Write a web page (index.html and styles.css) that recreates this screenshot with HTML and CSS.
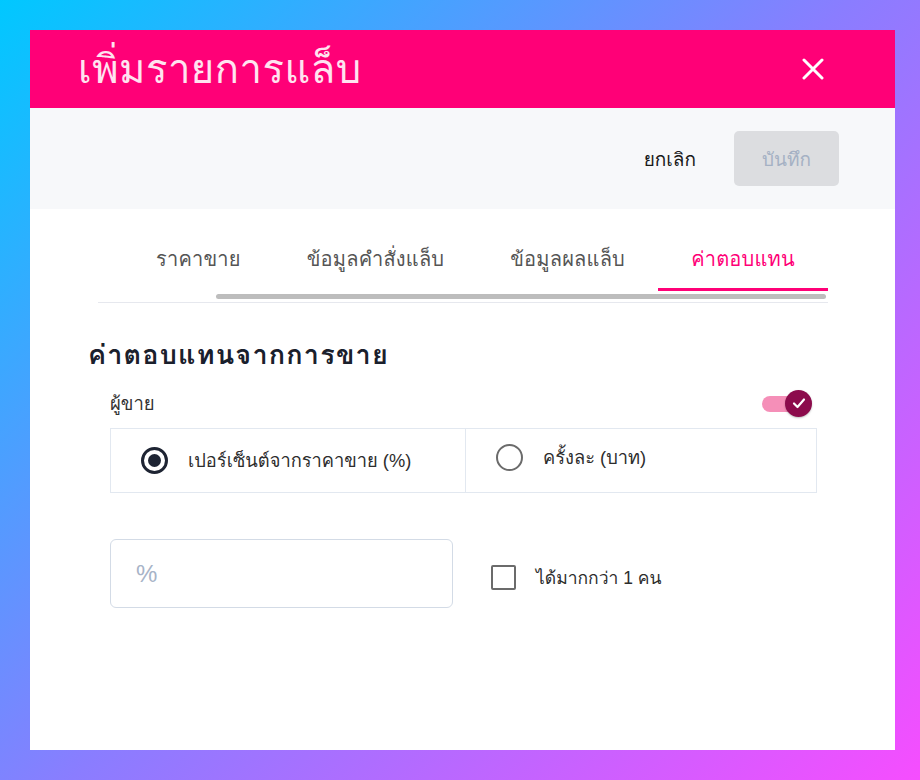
FILE: index.html
```html
<!DOCTYPE html>
<html lang="th">
<head>
<meta charset="utf-8">
<title>เพิ่มรายการแล็บ</title>
<link rel="stylesheet" href="styles.css">
</head>
<body>
<div class="modal">
  <header class="modal-header">
    <h1 class="modal-title">เพิ่มรายการแล็บ</h1>
    <button class="close-btn" aria-label="close">
      <svg width="22" height="22" viewBox="0 0 22 22"><path d="M2 2L20 20M20 2L2 20" stroke="#fff" stroke-width="3" stroke-linecap="round"/></svg>
    </button>
  </header>
  <div class="toolbar">
    <button class="btn-cancel">ยกเลิก</button>
    <button class="btn-save" disabled>บันทึก</button>
  </div>
  <div class="content">
    <div class="tabs-wrap">
      <nav class="tabs">
        <div class="tab">ราคาขาย</div>
        <div class="tab">ข้อมูลคำสั่งแล็บ</div>
        <div class="tab">ข้อมูลผลแล็บ</div>
        <div class="tab active">ค่าตอบแทน</div>
      </nav>
      <div class="scroll-track"><div class="scroll-thumb"></div></div>
    </div>
    <h2 class="section-title">ค่าตอบแทนจากการขาย</h2>
    <div class="field">
      <div class="field-head">
        <span class="field-label">ผู้ขาย</span>
        <div class="toggle">
          <div class="toggle-track"></div>
          <div class="toggle-thumb">
            <svg width="16" height="16" viewBox="0 0 16 16"><path d="M3 8.5L6.5 12L13 4.5" fill="none" stroke="#fff" stroke-width="2.2" stroke-linecap="round" stroke-linejoin="round"/></svg>
          </div>
        </div>
      </div>
      <div class="radio-group">
        <label class="radio-opt">
          <span class="radio checked"><span class="dot"></span></span>
          <span class="radio-text">เปอร์เซ็นต์จากราคาขาย (%)</span>
        </label>
        <label class="radio-opt">
          <span class="radio"></span>
          <span class="radio-text">ครั้งละ (บาท)</span>
        </label>
      </div>
      <div class="input-row">
        <div class="text-input"><span class="placeholder">%</span></div>
        <label class="check-opt">
          <span class="checkbox"></span>
          <span class="check-text">ได้มากกว่า 1 คน</span>
        </label>
      </div>
    </div>
  </div>
</div>
</body>
</html>
```
FILE: styles.css
```css
* { box-sizing: border-box; }
html, body { margin: 0; height: 100%; }
body {
  background: linear-gradient(135deg, #00c8ff 0%, #8a7dff 50%, #f64dff 100%);
  padding: 30px 25px 30px 30px;
  font-family: "Liberation Sans", "Loma", "Garuda", "Tlwg Typo", "Waree", "Noto Sans Thai", sans-serif;
  color: #1f2937;
}
.modal {
  width: 865px;
  height: 720px;
  background: #fff;
  display: flex;
  flex-direction: column;
}
.modal-header {
  height: 78px;
  background: #ff0077;
  display: flex;
  align-items: center;
  justify-content: space-between;
  padding: 0 71px 0 48px;
}
.modal-title {
  margin: 0;
  font-size: 40px;
  font-weight: 500;
  color: #ffe3f0;
  line-height: 1;
  letter-spacing: 0.5px;
}
.close-btn {
  background: none;
  border: 0;
  padding: 0;
  display: flex;
  cursor: pointer;
}
.toolbar {
  height: 101px;
  background: #f7f8fa;
  display: flex;
  align-items: center;
  justify-content: flex-end;
  gap: 38px;
  padding-right: 56px;
}
.btn-cancel {
  background: none;
  border: 0;
  font: inherit;
  font-size: 19px;
  color: #1a1a1a;
  padding: 0;
}
.btn-save {
  width: 105px;
  height: 55px;
  border: 0;
  border-radius: 5px;
  background: #dcdde0;
  color: #a5b1c4;
  font: inherit;
  font-size: 19px;
}
.content {
  padding: 0 67px 0 58px;
}
.tabs-wrap {
  margin: 21px 0 0 10px;
  border-bottom: 1px solid #e6e8ee;
  padding-bottom: 3px;
}
.tabs {
  display: flex;
  justify-content: flex-end;
}
.tab {
  padding: 17px 33px 17px;
  font-size: 20px;
  line-height: 24px;
  color: #555;
  border-bottom: 3px solid transparent;
  white-space: nowrap;
  letter-spacing: 0.2px;
}
.tab.active {
  color: #ff0077;
  border-bottom-color: #ff0077;
  min-width: 170px;
  text-align: center;
}
.scroll-track {
  margin-top: 3px;
  height: 5px;
  padding: 0 2px 0 118px;
}
.scroll-thumb {
  height: 5px;
  border-radius: 3px;
  background: #bdbdbd;
}
.section-title {
  margin: 36px 0 0;
  font-size: 27px;
  line-height: 32px;
  font-weight: 700;
  color: #1a202c;
  letter-spacing: 1.2px;
}
.field {
  margin-left: 22px;
  margin-right: 11px;
}
.field-head {
  display: flex;
  justify-content: space-between;
  align-items: center;
  height: 28px;
  margin-top: 18px;
}
.field-label {
  font-size: 18.5px;
  color: #333;
}
.toggle {
  position: relative;
  width: 50px;
  height: 27px;
  margin-right: 5px;
}
.toggle-track {
  position: absolute;
  left: 0;
  top: 6px;
  width: 40px;
  height: 16px;
  border-radius: 8px;
  background: #f58fb8;
}
.toggle-thumb {
  position: absolute;
  right: 0;
  top: 0;
  width: 27px;
  height: 27px;
  border-radius: 50%;
  background: #8c0b4c;
  display: flex;
  align-items: center;
  justify-content: center;
  box-shadow: 0 1px 2px rgba(0,0,0,0.25);
}
.radio-group {
  margin-top: 11px;
  display: grid;
  grid-template-columns: 354px 1fr;
  border: 1px solid #e2e8f0;
  height: 65px;
}
.radio-opt {
  display: flex;
  align-items: center;
  gap: 20px;
  padding-left: 30px;
}
.radio-opt + .radio-opt {
  border-left: 1px solid #e2e8f0;
  padding-bottom: 6px;
  gap: 20px;
}
.radio {
  width: 27px;
  height: 27px;
  border-radius: 50%;
  border: 2px solid #6b6b6b;
  display: flex;
  align-items: center;
  justify-content: center;
  flex: none;
}
.radio.checked {
  border: 3px solid #1e2433;
}
.radio .dot {
  width: 13px;
  height: 13px;
  border-radius: 50%;
  background: #1e2433;
}
.radio-text {
  font-size: 18.3px;
  color: #2d2d2d;
}
.input-row {
  margin-top: 46px;
  display: flex;
  align-items: center;
  gap: 38px;
}
.text-input {
  width: 343px;
  height: 69px;
  border: 1px solid #d3dbe6;
  border-radius: 6px;
  display: flex;
  align-items: center;
  padding-left: 25px;
}
.placeholder {
  font-size: 24px;
  color: #a7b3c7;
}
.check-opt {
  display: flex;
  align-items: center;
  gap: 20px;
  margin-top: 8px;
}
.checkbox {
  width: 25px;
  height: 25px;
  border: 2px solid #6b6b6b;
  border-radius: 2px;
}
.check-text {
  font-size: 17.5px;
  color: #2d2d2d;
}
```
